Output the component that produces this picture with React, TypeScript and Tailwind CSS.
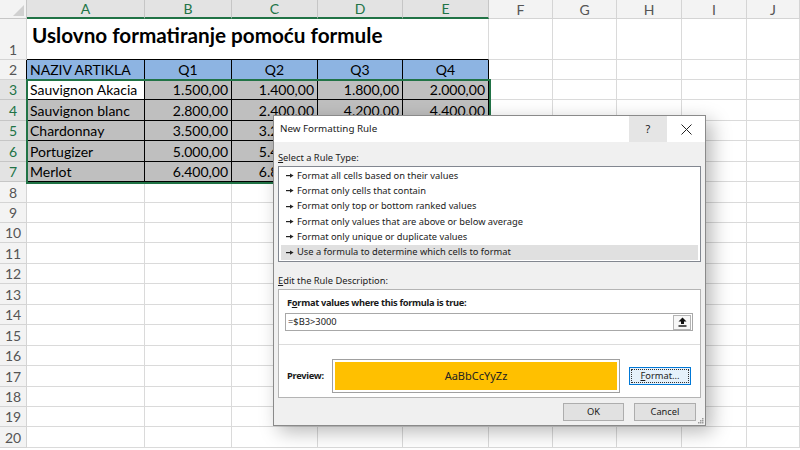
import React from "react"

const COLS = [
  { l: "A", w: "w-[118px]", sel: true },
  { l: "B", w: "w-[87px]", sel: true },
  { l: "C", w: "w-[86px]", sel: true },
  { l: "D", w: "w-[85px]", sel: true },
  { l: "E", w: "w-[86px]", sel: true },
  { l: "F", w: "w-[64px]", sel: false },
  { l: "G", w: "w-[64px]", sel: false },
  { l: "H", w: "w-[65px]", sel: false },
  { l: "I", w: "w-[65px]", sel: false },
  { l: "J", w: "flex-1", sel: false },
]

const HEAD = ["NAZIV ARTIKLA", "Q1", "Q2", "Q3", "Q4"]

const DATA = [
  ["Sauvignon Akacia", "1.500,00", "1.400,00", "1.800,00", "2.000,00"],
  ["Sauvignon blanc", "2.800,00", "2.400,00", "4.200,00", "4.400,00"],
  ["Chardonnay", "3.500,00", "3.200,00", "2.900,00", "3.100,00"],
  ["Portugizer", "5.000,00", "5.400,00", "4.800,00", "5.200,00"],
  ["Merlot", "6.400,00", "6.800,00", "6.100,00", "7.000,00"],
]

const RULES = [
  "Format all cells based on their values",
  "Format only cells that contain",
  "Format only top or bottom ranked values",
  "Format only values that are above or below average",
  "Format only unique or duplicate values",
  "Use a formula to determine which cells to format",
]

const ROWS = Array.from({ length: 20 }, (_, i) => i + 1)

function Bullet() {
  return (
    <svg width="8" height="7" viewBox="0 0 8 7" className="shrink-0">
      <rect x="0" y="3" width="5" height="1.2" fill="#222" />
      <path d="M4 1.4 L7.6 3.6 L4 5.8 Z" fill="#222" />
    </svg>
  )
}

function cellText(r: number, c: number) {
  if (r === 1 && c === 0) {
    return (
      <span className="whitespace-nowrap text-[20.7px] font-bold text-black leading-none pb-[13px] pl-[2px]">
        Uslovno formatiranje pomoću formule
      </span>
    )
  }
  if (r === 2 && c < 5) return HEAD[c]
  if (r >= 3 && r <= 7 && c < 5) return DATA[r - 3][c]
  return null
}

function Cell({ r, c }: { r: number; c: number }) {
  const col = COLS[c]
  const inTable = r >= 2 && r <= 7 && c <= 4
  const text = cellText(r, c)

  let bg = ""
  if (inTable && r === 2) bg = "bg-[#8db4e2]"
  else if (inTable && !(r === 3 && c === 0)) bg = "bg-[#bfbfbf]"

  let border = "border-r border-b border-[#dadada]"
  if (inTable) border = "border-r border-b border-black"
  else if (r === 1 && c <= 3) border = "border-b border-black"
  else if (r === 1 && c === 4) border = "border-r border-b border-[#dadada] border-b-black"

  let align = "justify-start pl-[3px]"
  if (r === 2 && c > 0) align = "justify-center"
  else if (c > 0) align = "justify-end pr-[3px]"

  return (
    <div
      className={`${col.w} ${bg} ${border} ${align} flex items-end h-full text-[14px] leading-[19px] text-black overflow-visible whitespace-nowrap`}
    >
      {text}
    </div>
  )
}

export default function App() {
  return (
    <div className="relative w-[800px] h-[450px] overflow-hidden bg-white font-['Lato','Liberation_Sans',sans-serif]">
      {/* column headers */}
      <div className="flex h-[19px]">
        <div className="w-[27px] shrink-0 bg-[#f3f3f3] border-r border-b border-[#c6c6c6] flex items-end justify-end p-[2px]">
          <svg width="11" height="11" viewBox="0 0 11 11">
            <path d="M11 0 L11 11 L0 11 Z" fill="#d0d0d0" />
          </svg>
        </div>
        {COLS.map((c) => (
          <div
            key={c.l}
            className={`${c.w} flex items-center justify-center text-[14px] ${
              c.sel
                ? "bg-[#e3e3e3] text-[#217346] border-b-2 border-b-[#217346] border-r border-r-[#c6c6c6]"
                : "bg-[#f3f3f3] text-[#555] border-b border-r border-[#d4d4d4]"
            }`}
          >
            {c.l}
          </div>
        ))}
      </div>

      {/* rows */}
      {ROWS.map((r) => {
        const selRow = r >= 3 && r <= 7
        return (
          <div key={r} className={`flex ${r === 1 ? "h-[40.5px]" : "h-[20.45px]"}`}>
            <div
              className={`w-[27px] shrink-0 flex items-end justify-center text-[14px] leading-[19px] border-r border-b ${
                selRow
                  ? "bg-[#e3e3e3] text-[#217346] border-[#c6c6c6]"
                  : "bg-[#f3f3f3] text-[#555] border-[#d4d4d4]"
              } ${r === 2 ? "border-r-black" : ""}`}
            >
              {r}
            </div>
            {COLS.map((_, c) => (
              <Cell key={c} r={r} c={c} />
            ))}
          </div>
        )
      })}

      {/* selection */}
      <div className="absolute left-[26px] top-[79px] w-[465px] h-[105px] border-2 border-[#217346] pointer-events-none" />

      {/* dialog */}
      <div className="absolute left-[273px] top-[115px] w-[433px] h-[311px] border border-[#8a8a8a] bg-[#f0f0f0] shadow-[6px_6px_18px_rgba(0,0,0,0.28)] flex flex-col font-['Noto_Sans','Open_Sans',sans-serif] text-[9.3px] text-[#1a1a1a]">
        <div className="h-[26px] bg-white flex items-center shrink-0">
          <span className="pl-[6px] flex-1 text-[9.8px]">New Formatting Rule</span>
          <div className="w-[38px] h-full bg-[#e5e5e5] flex items-center justify-center text-[11px]">?</div>
          <div className="w-[38px] h-full flex items-center justify-center">
            <svg width="11" height="11" viewBox="0 0 11 11">
              <path d="M0.5 0.5 L10.5 10.5 M10.5 0.5 L0.5 10.5" stroke="#222" strokeWidth="1" />
            </svg>
          </div>
        </div>

        <div className="px-[4px] flex flex-col flex-1">
          <div className="pt-[9px] leading-[14px]">
            <span className="underline">S</span>elect a Rule Type:
          </div>
          <div className="mt-[1px] h-[96px] border border-[#828790] bg-white py-[1px] flex flex-col">
            {RULES.map((t, i) => (
              <div
                key={t}
                className={`h-[15.4px] mx-[2px] pl-[5px] flex items-center gap-[3px] ${
                  i === RULES.length - 1 ? "bg-[#e0e0e0]" : ""
                }`}
              >
                <Bullet />
                <span>{t}</span>
              </div>
            ))}
          </div>

          <div className="mt-[12px] leading-[14px]">
            <span className="underline">E</span>dit the Rule Description:
          </div>
          <div className="mt-[1px] h-[109px] border border-[#b4b4b4] bg-white flex flex-col">
            <div className="pt-[6px] pl-[8px] leading-[14px] font-bold tracking-[-0.3px]">
              F<span className="underline">o</span>rmat values where this formula is true:
            </div>
            <div className="mt-[3px] ml-[6px] mr-[7px] h-[18px] border border-[#a8a8a8] bg-white flex items-center">
              <span className="pl-[2px] flex-1">=$B3&gt;3000</span>
              <div className="w-[18px] h-[15px] mr-[1px] border border-[#b4b4b4] bg-[#f7f7f7] flex items-center justify-center">
                <svg width="9" height="10" viewBox="0 0 9 10">
                  <path d="M4.5 0.5 L8.5 4.5 L6 4.5 L6 7 L3 7 L3 4.5 L0.5 4.5 Z" fill="#111" />
                  <rect x="0.5" y="8.3" width="8" height="1.4" fill="#111" />
                </svg>
              </div>
            </div>
            <div className="mt-[13px] h-px bg-[#dcdcdc]" />
            <div className="mt-[14px] flex items-center">
              <span className="w-[53px] pl-[8px] font-bold tracking-[-0.3px] shrink-0">Preview:</span>
              <div className="w-[288px] h-[34px] border border-[#a0a0a0] bg-white p-[2px] shrink-0">
                <div className="w-full h-full bg-[#ffc000] flex items-center justify-center text-[11px] text-[#222]">
                  AaBbCcYyZz
                </div>
              </div>
              <div className="ml-[9px] w-[62px] h-[18px] border border-[#0078d7] bg-[#e5f1fb] p-[1px]">
                <div className="w-full h-full border border-dotted border-[#333] flex items-center justify-center">
                  <span>
                    <span className="underline">F</span>ormat...
                  </span>
                </div>
              </div>
            </div>
          </div>

          <div className="mt-[5px] mr-[5px] flex justify-end gap-[10px]">
            <div className="w-[61px] h-[18px] border border-[#adadad] bg-[#e1e1e1] flex items-center justify-center">OK</div>
            <div className="w-[62px] h-[18px] border border-[#adadad] bg-[#e1e1e1] flex items-center justify-center">Cancel</div>
          </div>
        </div>

        <svg width="6" height="6" viewBox="0 0 6 6" className="absolute right-[1px] bottom-[1px]">
          <rect x="4" y="0" width="1.5" height="1.5" fill="#9a9a9a" />
          <rect x="2" y="2" width="1.5" height="1.5" fill="#9a9a9a" />
          <rect x="4" y="2" width="1.5" height="1.5" fill="#9a9a9a" />
          <rect x="0" y="4" width="1.5" height="1.5" fill="#9a9a9a" />
          <rect x="2" y="4" width="1.5" height="1.5" fill="#9a9a9a" />
          <rect x="4" y="4" width="1.5" height="1.5" fill="#9a9a9a" />
        </svg>
      </div>
    </div>
  )
}
